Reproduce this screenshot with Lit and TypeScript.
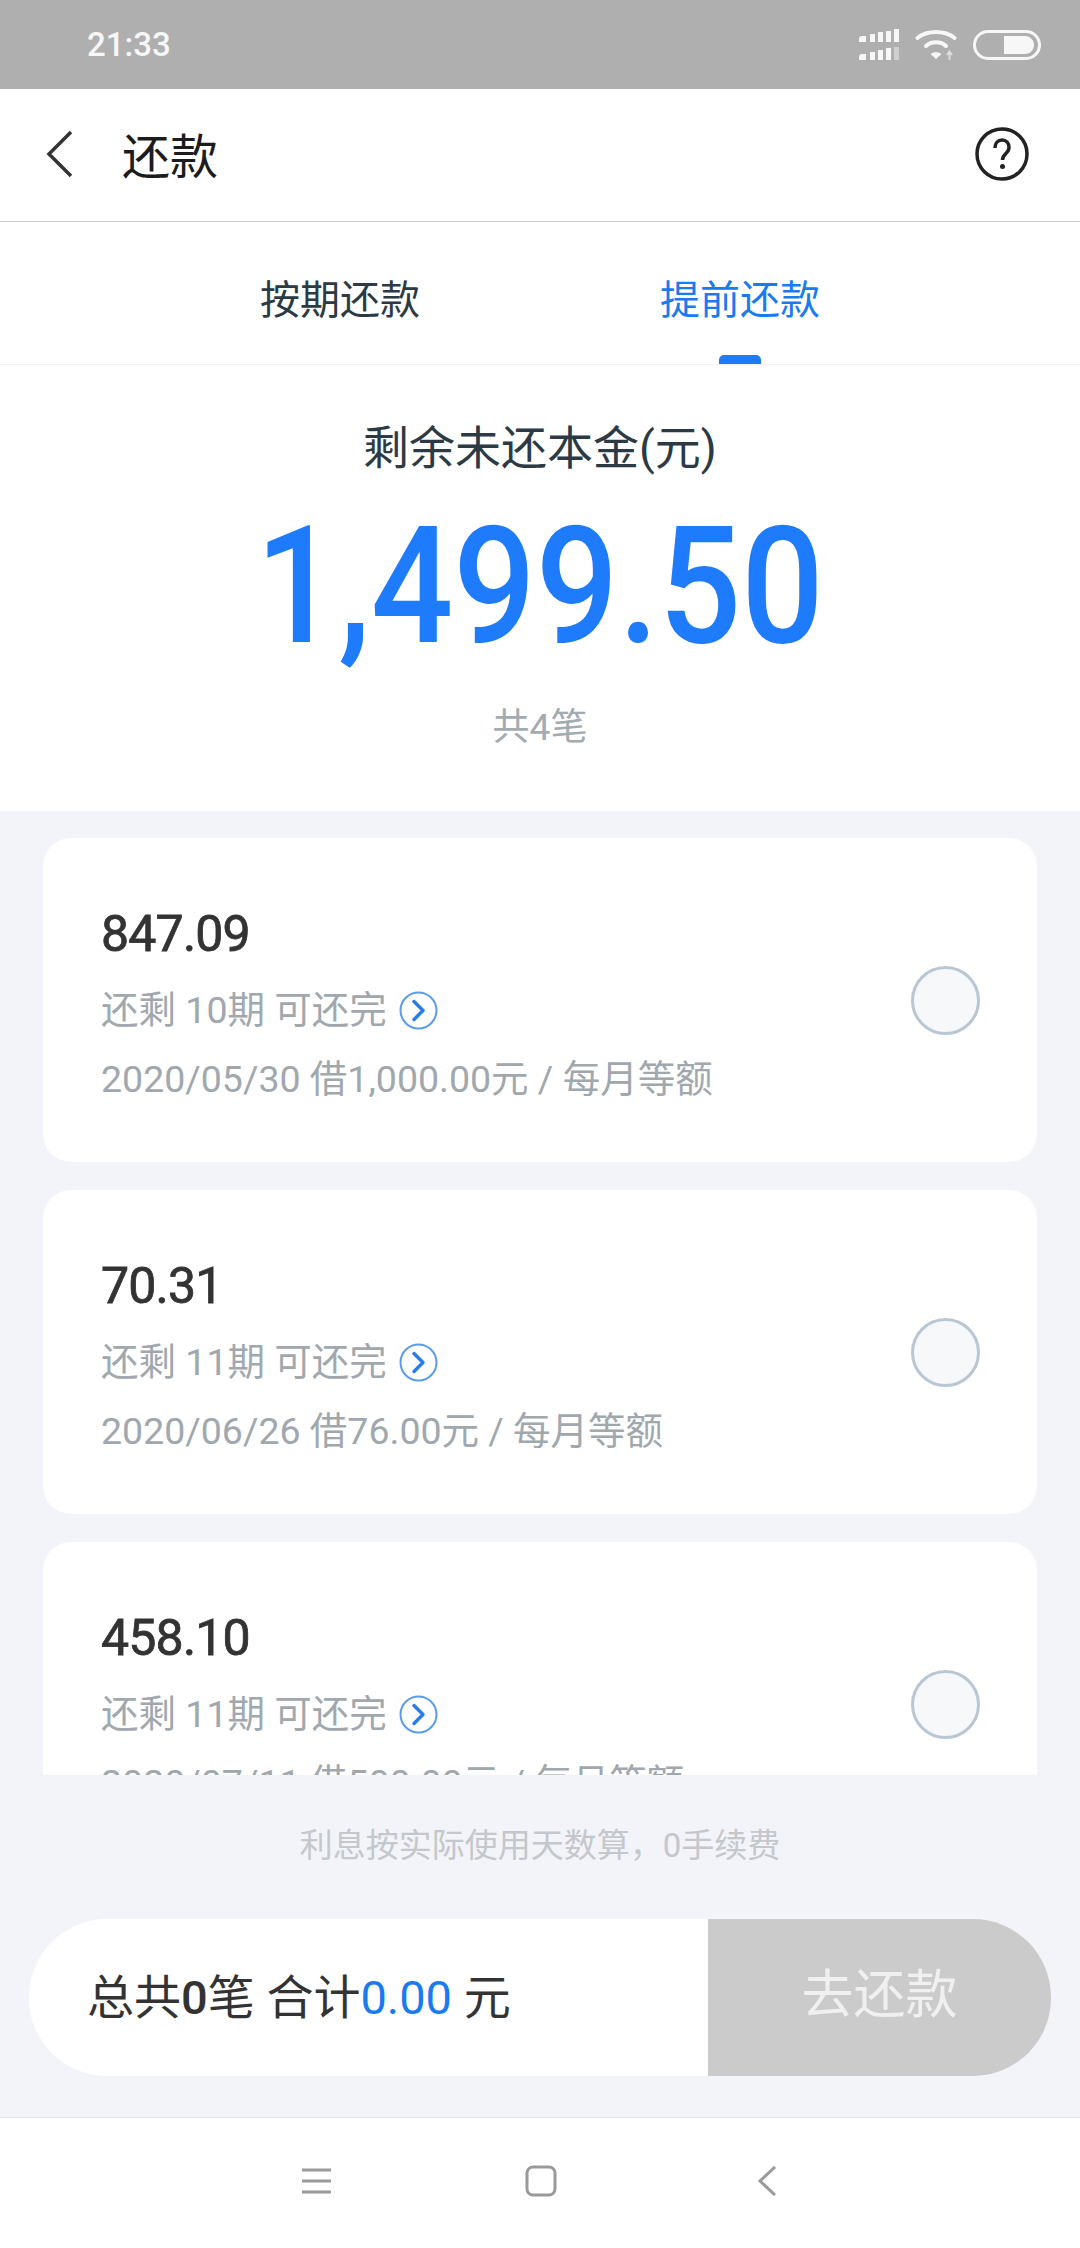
import { LitElement, css, html } from 'lit';
import { customElement } from 'lit/decorators.js';

const loans = [
  { amount: '847.09', left: '还剩 10期 可还完', detail: '2020/05/30 借1,000.00元 / 每月等额' },
  { amount: '70.31', left: '还剩 11期 可还完', detail: '2020/06/26 借76.00元 / 每月等额' },
  { amount: '458.10', left: '还剩 11期 可还完', detail: '2020/07/11 借500.00元 / 每月等额' },
];

@customElement('app-root')
export class AppRoot extends LitElement {
  static styles = css`
    :host {
      display: flex;
      flex-direction: column;
      width: 1080px;
      height: 2248px;
      overflow: hidden;
      background: #f3f4f9;
      color: #333;
      font-family: Roboto, "Noto Sans CJK SC", sans-serif;
    }

    svg {
      display: block;
      flex: none;
    }

    .status {
      height: 89px;
      flex: none;
      display: flex;
      align-items: center;
      justify-content: space-between;
      padding: 0 39px 0 87px;
      background: #afafaf;
      color: #f7f7f7;
      font-size: 33px;
      font-weight: 500;
    }

    .status-icons {
      display: flex;
      align-items: center;
      gap: 16px;
    }

    .header {
      flex: none;
      display: flex;
      align-items: center;
      padding: 0 51px 2px 45px;
      height: 130px;
      background: #fff;
      border-bottom: 1px solid #cfcfcf;
    }

    .title {
      flex: 1;
      margin: -2px 0 0 47px;
      font-size: 48px;
      color: #1c1c1c;
    }

    .tabs {
      height: 142px;
      flex: none;
      display: flex;
      justify-content: center;
      background: #fff;
      border-bottom: 1px solid #f0f0f0;
    }

    .tab {
      position: relative;
      width: 400px;
      padding-top: 49px;
      text-align: center;
      font-size: 40px;
      line-height: 60px;
      color: #2c3a45;
    }

    .tab.active {
      color: #1a7af0;
    }

    .tab.active::after {
      content: '';
      position: absolute;
      left: 179px;
      bottom: 0;
      width: 42px;
      height: 9px;
      border-radius: 5px 5px 0 0;
      background: #1c7cfa;
    }

    .hero {
      height: 446px;
      flex: none;
      display: flex;
      flex-direction: column;
      align-items: center;
      background: #fff;
    }

    .hero-label {
      margin-top: 50px;
      font-size: 46px;
      line-height: 66px;
      color: #2c3a45;
    }

    .hero-amount {
      margin-top: 15px;
      font-size: 164px;
      line-height: 180px;
      font-weight: 500;
      color: #1e7cfc;
      transform: scaleX(0.886);
    }

    .hero-count {
      margin-top: 25px;
      font-size: 37px;
      line-height: 54px;
      color: #a3abb2;
    }

    .list {
      height: 964px;
      flex: none;
      overflow: hidden;
      display: flex;
      flex-direction: column;
      gap: 28px;
      padding: 27px 43px 0;
      box-sizing: border-box;
    }

    .card {
      height: 324px;
      flex: none;
      display: flex;
      align-items: center;
      justify-content: space-between;
      padding: 0 58px;
      background: #fff;
      border-radius: 28px;
    }

    .info {
      padding-top: 4px;
    }

    .amount {
      font-size: 50px;
      line-height: 72px;
      font-weight: 400;
      -webkit-text-stroke: 0.8px #333;
      letter-spacing: -0.8px;
      color: #333;
    }

    .line {
      display: flex;
      align-items: center;
      gap: 12px;
      margin-top: 15px;
      font-size: 37.5px;
      line-height: 54px;
      color: #a0a8ae;
    }

    .amount + .line {
      margin-top: 13px;
    }

    .check {
      width: 69px;
      height: 69px;
      box-sizing: border-box;
      margin-right: -1px;
      border: 3px solid #b9c6d3;
      border-radius: 50%;
      background: #f7f8fa;
    }

    .note {
      height: 144px;
      flex: none;
      padding-top: 47px;
      box-sizing: border-box;
      text-align: center;
      font-size: 33px;
      line-height: 48px;
      color: #c4c7cb;
    }

    .bar {
      height: 157px;
      flex: none;
      display: flex;
      margin: 0 29px;
      border-radius: 78px;
      overflow: hidden;
      background: #fff;
    }

    .sum {
      flex: 1;
      padding-left: 58px;
      font-size: 47px;
      line-height: 158px;
      color: #333;
      white-space: pre;
    }

    .sum b {
      font-weight: 500;
    }

    .sum span {
      color: #1a7af0;
    }

    .pay {
      width: 343px;
      text-align: center;
      font-size: 52px;
      line-height: 154px;
      color: #f0f0f0;
      background: #cbcbcb;
    }

    .nav {
      margin-top: 41px;
      flex: 1;
      display: flex;
      align-items: center;
      gap: 194px;
      padding: 0 0 4px 302px;
      background: #fff;
      border-top: 1px solid #e2e2e2;
    }

    .nav svg:last-child {
      margin-left: 6px;
    }
  `;

  private renderCard(loan: { amount: string; left: string; detail: string }) {
    return html`
      <div class="card">
        <div class="info">
          <div class="amount">${loan.amount}</div>
          <div class="line">
            ${loan.left}
            <svg width="39" height="39" viewBox="0 0 39 39" fill="none">
              <circle cx="19.5" cy="19.5" r="18" stroke="#5b9be8" stroke-width="2" />
              <path d="M15 10.5l9 9-9 9" stroke="#2a7ce6" stroke-width="3.5" stroke-linecap="round" stroke-linejoin="round" />
            </svg>
          </div>
          <div class="line">${loan.detail}</div>
        </div>
        <div class="check"></div>
      </div>
    `;
  }

  render() {
    return html`
      <div class="status">
        <span>21:33</span>
        <div class="status-icons">
          <svg width="40" height="31" viewBox="0 0 40 31" fill="#f7f7f7">
            <path d="M0 10c0-2 1-3 3-3h4v6H0zM11 5h5v8h-5zM19 3h5v10h-5zM27 2h5v11h-5zM35 0h5v13h-5z" />
            <path d="M0 28c0-2 1-3 3-3h4v6H0zM11 23h5v8h-5zM19 21h5v10h-5zM27 19h5v12h-5z" />
            <path d="M35 18h5v13h-5z" opacity=".45" />
          </svg>
          <svg width="42" height="31" viewBox="0 0 42 31" fill="none" stroke="#f7f7f7" stroke-width="4" stroke-linecap="round">
            <path d="M2.500 9C12 1 30 1 39.500 9" />
            <path d="M11 17c5-5 15-5 20 0" />
            <path d="M21 30l-5.500-5c3-2.500 8-2.500 11 0z" fill="#f7f7f7" stroke="none" />
            <path d="M34.500 23v8M32 26l2.500-3.500L37 26" stroke-width="2" stroke="#dcdcdc" stroke-linecap="butt" />
          </svg>
          <svg width="68" height="30" viewBox="0 0 68 30" fill="none">
            <rect x="1.500" y="1.500" width="65" height="27" rx="13.500" stroke="#f7f7f7" stroke-width="3" />
            <path d="M31 6h21c5 0 9 4 9 9s-4 9-9 9H31z" fill="#f7f7f7" />
          </svg>
        </div>
      </div>

      <div class="header">
        <svg width="30" height="48" viewBox="0 0 30 48" fill="none">
          <path d="M26 2L4 24l22 22" stroke="#333" stroke-width="3.500" />
        </svg>
        <div class="title">还款</div>
        <svg width="54" height="54" viewBox="0 0 54 54" fill="none">
          <circle cx="27" cy="27" r="25" stroke="#222" stroke-width="3.500" />
          <path d="M20 21c0-5 3-8 7-8s7 3 7 7.500c0 6-6.500 6-6.500 12.500" stroke="#222" stroke-width="3.500" />
          <circle cx="27.500" cy="39.500" r="2.500" fill="#222" />
        </svg>
      </div>

      <div class="tabs">
        <div class="tab">按期还款</div>
        <div class="tab active">提前还款</div>
      </div>

      <div class="hero">
        <div class="hero-label">剩余未还本金(元)</div>
        <div class="hero-amount">1,499.50</div>
        <div class="hero-count">共4笔</div>
      </div>

      <div class="list">${loans.map((loan) => this.renderCard(loan))}</div>

      <div class="note">利息按实际使用天数算，0手续费</div>

      <div class="bar">
        <div class="sum">总共<b>0</b>笔 合计<span>0.00</span> 元</div>
        <div class="pay">去还款</div>
      </div>

      <div class="nav">
        <svg width="29" height="26" viewBox="0 0 29 26" fill="none" stroke="#9a9a9a" stroke-width="3">
          <path d="M0 2h29M0 13h29M0 24h29" />
        </svg>
        <svg width="32" height="32" viewBox="0 0 32 32" fill="none">
          <rect x="2" y="2" width="28" height="28" rx="6" stroke="#9a9a9a" stroke-width="3" />
        </svg>
        <svg width="20" height="30" viewBox="0 0 20 30" fill="none">
          <path d="M18 1L3 15l15 14" stroke="#9a9a9a" stroke-width="3" />
        </svg>
      </div>
    `;
  }
}
